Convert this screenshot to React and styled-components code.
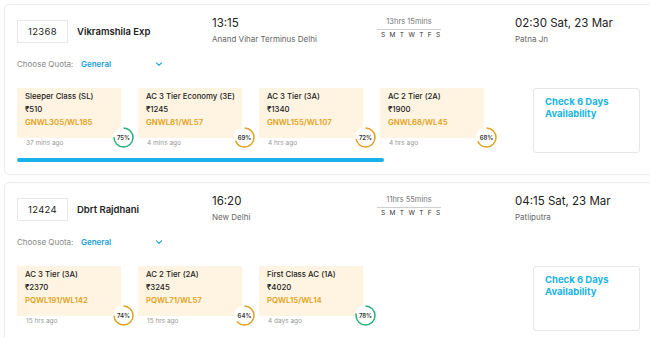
import styled, { createGlobalStyle } from 'styled-components'

const GlobalStyle = createGlobalStyle`
  html, body {
    margin: 0;
    padding: 0;
    background: #ffffff;
    overflow: hidden;
  }
  body {
    font-family: Inter, "Noto Sans", "Liberation Sans", sans-serif;
    color: #222;
  }
`

const Page = styled.div`
  width: 650px;
  height: 338px;
  overflow: hidden;
  padding: 4px 0 0 4px;
  box-sizing: border-box;
`
const TrainCard = styled.div`
  width: 680px;
  border: 1px solid #ececec;
  border-radius: 5px;
  padding: 10px 0 12px 12px;
  box-sizing: border-box;
  margin-bottom: 7px;
`
const Header = styled.div`
  display: flex;
  align-items: flex-start;
`
const TrainInfo = styled.div`
  width: 195px;
  display: flex;
  align-items: center;
  margin-top: 5px;
`
const NumberBox = styled.div`
  width: 51px;
  height: 23px;
  border: 1px solid #e8e8e8;
  box-sizing: border-box;
  display: flex;
  align-items: center;
  justify-content: center;
  font-size: 9.5px;
  color: #222;
  letter-spacing: 0.3px;
`
const TrainName = styled.div`
  margin-left: 9px;
  font-size: 9.5px;
  font-weight: 600;
  color: #222;
`
const Station = styled.div`
  width: ${p => p.$width || 'auto'};
`
const Time = styled.div`
  font-size: 11.5px;
  line-height: 16px;
  color: #222;
`
const Place = styled.div`
  font-size: 8px;
  line-height: 14px;
  margin-top: 1px;
  color: #666;
`
const Duration = styled.div`
  width: 64px;
  margin-right: 74px;
  text-align: center;
  padding-top: 2px;
`
const DurationText = styled.div`
  font-size: 7.5px;
  line-height: 10px;
  color: #777;
  padding-bottom: 2px;
  border-bottom: 1px solid #cfcfcf;
`
const Days = styled.div`
  font-size: 6.5px;
  line-height: 10px;
  color: #333;
  letter-spacing: 4.4px;
  padding-left: 4px;
`
const QuotaRow = styled.div`
  display: flex;
  align-items: center;
  margin-top: 11px;
  height: 14px;
  font-size: 8px;
  white-space: nowrap;
`
const QuotaLabel = styled.span`
  color: #888;
  width: 64px;
`
const QuotaSelect = styled.div`
  width: 82px;
  display: flex;
  align-items: center;
  justify-content: space-between;
  color: #1a9fdc;
  font-weight: 600;
`
const FareRow = styled.div`
  display: flex;
  align-items: flex-start;
  margin-top: 17px;
`
const FareList = styled.div`
  width: 516px;
  display: flex;
  gap: 17px;
`
const FareItem = styled.div`
  width: 104px;
`
const FareBox = styled.div`
  position: relative;
  height: 50px;
  background: #fff4e1;
  padding: 2px 8px 0;
  box-sizing: border-box;
`
const FareLine = styled.div`
  line-height: 13px;
  white-space: nowrap;
  color: ${p => p.$gold ? '#e2a120' : '#222'};
  font-weight: ${p => p.$gold ? 600 : 500};
  font-size: ${p => p.$gold ? '7.8px' : '7.8px'};
`
const Updated = styled.div`
  font-size: 6.5px;
  line-height: 10px;
  color: #999;
  padding-left: 9px;
`
const Ring = styled.div`
  position: absolute;
  right: -13px;
  bottom: -10px;
  width: 21px;
  height: 21px;
  border-radius: 50%;
  background: #fff;
  display: flex;
  align-items: center;
  justify-content: center;
  font-size: 6px;
  font-weight: 600;
  color: #333;
  svg {
    position: absolute;
    inset: 0;
  }
`
const CheckBox = styled.div`
  width: 107px;
  height: 65px;
  border: 1px solid #e6e6e6;
  border-radius: 3px;
  box-sizing: border-box;
  padding: 7px 11px 0;
  color: #1ab4e4;
  font-size: 9.5px;
  font-weight: 700;
  line-height: 12px;
`
const Progress = styled.div`
  width: 367px;
  height: 4px;
  border-radius: 2px;
  background: #17b3e8;
  margin-top: 5px;
`

const Chevron = () => (
  <svg width="8" height="6" viewBox="0 0 8 6">
    <path d="M1.5 1.8 L4 4.3 L6.5 1.8" fill="none" stroke="#1a9fdc" strokeWidth="1.1" strokeLinecap="round" strokeLinejoin="round" />
  </svg>
)

const PercentRing = ({ value }) => {
  const r = 9.5
  const c = 2 * Math.PI * r
  const color = value >= 75 ? '#2bb07a' : '#e2a120'
  return (
    <Ring>
      <svg width="21" height="21" viewBox="0 0 21 21">
        <circle
          cx="10.5" cy="10.5" r={r} fill="none" stroke={color} strokeWidth="1.5"
          strokeDasharray={`${(c * value) / 100} ${c}`}
          transform="rotate(-90 10.5 10.5)"
        />
      </svg>
      {value}%
    </Ring>
  )
}

const trains = [
  {
    number: '12368', name: 'Vikramshila Exp',
    dep: '13:15', from: 'Anand Vihar Terminus Delhi',
    duration: '13hrs 15mins',
    arr: '02:30 Sat, 23 Mar', to: 'Patna Jn',
    loading: true,
    fares: [
      { cls: 'Sleeper Class (SL)', price: '₹510', status: 'GNWL305/WL185', pct: 75, ago: '37 mins ago' },
      { cls: 'AC 3 Tier Economy (3E)', price: '₹1245', status: 'GNWL81/WL57', pct: 69, ago: '4 mins ago' },
      { cls: 'AC 3 Tier (3A)', price: '₹1340', status: 'GNWL155/WL107', pct: 72, ago: '4 hrs ago' },
      { cls: 'AC 2 Tier (2A)', price: '₹1900', status: 'GNWL68/WL45', pct: 68, ago: '4 hrs ago' },
    ],
  },
  {
    number: '12424', name: 'Dbrt Rajdhani',
    dep: '16:20', from: 'New Delhi',
    duration: '11hrs 55mins',
    arr: '04:15 Sat, 23 Mar', to: 'Patliputra',
    loading: false,
    fares: [
      { cls: 'AC 3 Tier (3A)', price: '₹2370', status: 'PQWL191/WL142', pct: 74, ago: '15 hrs ago' },
      { cls: 'AC 2 Tier (2A)', price: '₹3245', status: 'PQWL71/WL57', pct: 64, ago: '15 hrs ago' },
      { cls: 'First Class AC (1A)', price: '₹4020', status: 'PQWL15/WL14', pct: 78, ago: '4 days ago' },
    ],
  },
]

const App = () => {
  return (
    <>
      <GlobalStyle />
      <Page>
        {trains.map(t => (
          <TrainCard key={t.number}>
            <Header>
              <TrainInfo>
                <NumberBox>{t.number}</NumberBox>
                <TrainName>{t.name}</TrainName>
              </TrainInfo>
              <Station $width="165px">
                <Time>{t.dep}</Time>
                <Place>{t.from}</Place>
              </Station>
              <Duration>
                <DurationText>{t.duration}</DurationText>
                <Days>SMTWTFS</Days>
              </Duration>
              <Station>
                <Time>{t.arr}</Time>
                <Place>{t.to}</Place>
              </Station>
            </Header>
            <QuotaRow>
              <QuotaLabel>Choose Quota:</QuotaLabel>
              <QuotaSelect>
                General
                <Chevron />
              </QuotaSelect>
            </QuotaRow>
            <FareRow>
              <FareList>
                {t.fares.map(f => (
                  <FareItem key={f.cls}>
                    <FareBox>
                      <FareLine>{f.cls}</FareLine>
                      <FareLine>{f.price}</FareLine>
                      <FareLine $gold>{f.status}</FareLine>
                      <PercentRing value={f.pct} />
                    </FareBox>
                    <Updated>{f.ago}</Updated>
                  </FareItem>
                ))}
              </FareList>
              <CheckBox>Check 6 Days Availability</CheckBox>
            </FareRow>
            {t.loading && <Progress />}
          </TrainCard>
        ))}
      </Page>
    </>
  )
}

export default App
